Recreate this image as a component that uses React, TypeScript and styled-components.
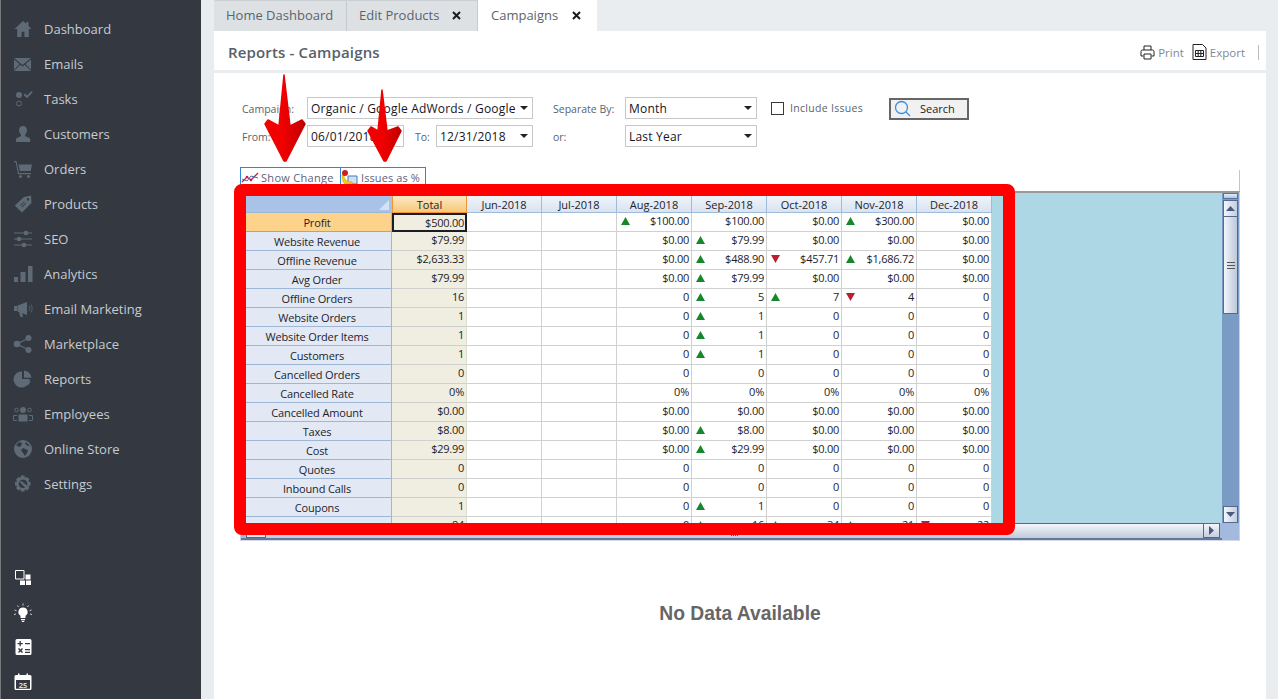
import React from "react";
import styled, { createGlobalStyle } from "styled-components";

const Global = createGlobalStyle`
  html, body { margin: 0; padding: 0; height: 100%; overflow: hidden; background: #e9edf0; }
  #root { height: 100%; }
  * { box-sizing: border-box; }
`;

const Page = styled.div`
  position: relative;
  display: flex;
  width: 1278px;
  height: 699px;
  overflow: hidden;
  font-family: "Open Sans", "Noto Sans", sans-serif;
  background: #e9edf0;
`;

const Sidebar = styled.nav`
  width: 201px;
  flex: none;
  background: #343840;
  border-left: 1px solid #77797c;
  display: flex;
  flex-direction: column;
  justify-content: space-between;
  padding: 11px 0 0;
`;
const NavList = styled.ul`
  list-style: none;
  margin: 0;
  padding: 0;
`;
const NavItem = styled.li`
  height: 35px;
  display: flex;
  align-items: center;
  padding-left: 12px;
  gap: 11px;
  color: #c5ccd2;
  font-size: 13px;
  svg { width: 20px; height: 20px; flex: none; fill: #5e6a76; color: #5e6a76; }
`;
const ToolList = styled.div`
  display: flex;
  flex-direction: column;
  padding-left: 12px;
  svg { display: block; width: 20px; height: 20px; margin: 7px 0 7.3px; color: #fff; fill: #fff; }
`;

const Main = styled.main`
  flex: 1;
  display: flex;
  flex-direction: column;
  padding: 0 12px 0 13px;
  min-width: 0;
`;
const Tabs = styled.div`
  display: flex;
  height: 31px;
  flex: none;
`;
const Tab = styled.div<{ $active?: boolean; $w: number }>`
  width: ${(p) => p.$w}px;
  display: flex;
  align-items: center;
  padding: 0 0 2px ${(p) => (p.$active ? 13 : 11)}px;
  font-size: 13px;
  color: #5a646e;
  background: ${(p) => (p.$active ? "#fff" : "#dde1e4")};
  border-top: 1px solid ${(p) => (p.$active ? "#fff" : "#c9ced3")};
  border-right: ${(p) => (p.$active ? "0" : "1px solid #c4cacf")};
  border-left: ${(p) => (p.$active ? "0" : "1px solid #dde1e4")};
`;
const TabClose = styled.span`
  margin-left: auto;
  margin-right: 16px;
  width: 9px;
  height: 9px;
  display: flex;
  svg { width: 9px; height: 9px; }
`;
const Panel = styled.section`
  flex: 1;
  background: #fff;
  display: flex;
  flex-direction: column;
  min-height: 0;
`;
const PanelHead = styled.header`
  height: 42px;
  flex: none;
  display: flex;
  align-items: center;
  padding: 3px 7px 0 14px;
  border-bottom: 3px solid #e9edf0;
`;
const Title = styled.h1`
  margin: 0 auto 0 0;
  font-size: 15px;
  font-weight: 600;
  letter-spacing: 0.15px;
  color: #56606a;
`;
const HeadAction = styled.span<{ $ml: number }>`
  display: flex;
  align-items: center;
  gap: 3px;
  margin-left: ${(p) => p.$ml}px;
  font-size: 11.500px;
  color: #7d8a98;
  svg { flex: none; }
`;
const HeadRule = styled.span`
  width: 1px;
  height: 15px;
  background: #b8bcc0;
  margin-left: 13px;
`;
const Filters = styled.div`
  display: flex;
  padding: 24px 0 0 28px;
  height: 94px;
  flex: none;
  font-size: 10.500px;
  color: #59636d;
`;
const FilterCol = styled.div<{ $w: number }>`
  width: ${(p) => p.$w}px;
  flex: none;
  display: flex;
  flex-direction: column;
  gap: 6px;
`;
const FilterRow = styled.div`
  display: flex;
  align-items: center;
  height: 22px;
`;
const Label = styled.label<{ $w: number; $pl?: number }>`
  width: ${(p) => p.$w}px;
  flex: none;
  padding: 1px 0 0 ${(p) => p.$pl ?? 0}px;
`;
const Select = styled.div<{ $w: number }>`
  width: ${(p) => p.$w}px;
  height: 22px;
  flex: none;
  border: 1px solid #c8c8c8;
  background: #fff;
  display: flex;
  align-items: center;
  padding: 0 4px 0 3px;
  font-size: 12px;
  letter-spacing: 0.2px;
  color: #15151f;
  white-space: nowrap;
  overflow: hidden;
`;
const Caret = styled.i`
  margin-left: auto;
  flex: none;
  width: 0;
  height: 0;
  border-left: 4px solid transparent;
  border-right: 4px solid transparent;
  border-top: 4px solid #222;
`;
const Check = styled.span`
  width: 13px;
  height: 13px;
  border: 1px solid #3a3a3a;
  margin-right: 6px;
  flex: none;
`;
const IncludeText = styled.span`
  letter-spacing: 0.3px;
  white-space: nowrap;
`;
const SearchBtn = styled.button`
  width: 80px;
  height: 22px;
  margin: 1px 0 0;
  border: 2px solid #666;
  background: #f1f1f1;
  display: flex;
  align-items: center;
  padding: 0 0 0 3px;
  font: 11px "Open Sans", sans-serif;
  color: #222;
  gap: 9px;
`;
const Toolbar = styled.div`
  display: flex;
  height: 24px;
  flex: none;
  margin: 0 26px;
`;
const ToolBtn = styled.button<{ $w: number; $ls: number }>`
  width: ${(p) => p.$w}px;
  height: 20px;
  padding: 0;
  display: flex;
  align-items: center;
  gap: 2px;
  background: #fff;
  border: 1px solid #2d86d8;
  margin-right: -1px;
  font: 11px "Open Sans", sans-serif;
  letter-spacing: ${(p) => p.$ls}px;
  color: #5f5f75;
  svg { flex: none; }
`;
const ToolRule = styled.div`
  flex: 1;
  margin-top: 3px;
  border-right: 1px solid #c4c4c4;
`;
const GridFrame = styled.div`
  margin: 0 26px;
  height: 350px;
  flex: none;
  display: grid;
  grid-template-columns: 1fr 17px;
  grid-template-rows: 1fr 17px;
  background: #aed7e6;
  border-top: 2px solid #999;
  border-left: 1px solid #c9d3df;
  border-right: 1px solid #c9d3df;
  border-bottom: 1px solid #d4dbe6;
`;
const GridScroll = styled.div`
  overflow: hidden;
  padding: 3px 0 0 5px;
  min-height: 0;
`;
const Sheet = styled.div`
  display: grid;
  width: 746px;
  grid-template-columns: 146px repeat(8, 75px);
  grid-auto-rows: 19px;
  font-size: 11px;
  color: #1d1d2b;
`;
const Corner = styled.div`
  height: 17px;
  background: #a9c3e8;
  position: relative;
  border-bottom: 1px solid #9db8d6;
  &::after {
    content: "";
    position: absolute;
    right: 3px;
    bottom: 2px;
    border-left: 10px solid transparent;
    border-bottom: 10px solid #d5e2f4;
  }
`;
const ColHead = styled.div<{ $on?: boolean }>`
  height: 17px;
  display: flex;
  align-items: center;
  justify-content: center;
  background: ${(p) =>
    p.$on ? "linear-gradient(#fbe9c6,#f8c878)" : "linear-gradient(#f0f4fa,#d9e3f1)"};
  border-right: 1px solid ${(p) => (p.$on ? "#f29536" : "#9ebbd9")};
  border-left: ${(p) => (p.$on ? "1px solid #f29536" : "0")};
  border-bottom: 1px solid ${(p) => (p.$on ? "#f29536" : "#9ebbd9")};
  line-height: 1;
`;
const RowHead = styled.div<{ $on?: boolean }>`
  display: flex;
  align-items: center;
  justify-content: center;
  padding: 0 3px 0 0;
  letter-spacing: -0.15px;
  background: ${(p) => (p.$on ? "#fdd28b" : "#e2e9f5")};
  border-right: 1px solid #9db8d6;
  border-bottom: 1px solid ${(p) => (p.$on ? "#f29536" : "#9db8d6")};
  margin-top: -2px;
  height: 19px;
`;
const Cell = styled.div<{ $total?: boolean; $sel?: boolean }>`
  display: flex;
  align-items: center;
  justify-content: flex-end;
  margin-top: -2px;
  height: 19px;
  padding: 0 2px 3px 4px;
  letter-spacing: -0.25px;
  background: ${(p) => (p.$total ? "#efeee0" : "#fff")};
  border-right: 1px solid ${(p) => (p.$total ? "#dcdcd0" : "#d0d0d0")};
  border-bottom: 1px solid #d0d0d0;
  ${(p) => p.$sel && "border: 2px solid #1c1c28; padding: 0 1px 1px 4px;"}
`;
const Trend = styled.svg`
  width: 9px;
  height: 8px;
  margin-right: auto;
  flex: none;
`;
const VBar = styled.div`
  background: #7a9bc4;
  display: flex;
  flex-direction: column;
  padding: 0 1px;
  min-height: 0;
  grid-row: 1;
  grid-column: 2;
`;
const MiniBtn = styled.div`
  height: 6px;
  flex: none;
  background: linear-gradient(#e4eefb, #a9c4ea);
  border: 1px solid #5a74a0;
  margin-bottom: 1px;
`;
const ArrowBtn = styled.div<{ $auto?: boolean }>`
  flex: none;
  height: 17px;
  border: 1px solid #56688e;
  background: linear-gradient(90deg, #f4f6fa, #c3cede);
  display: flex;
  align-items: center;
  justify-content: center;
  ${(p) => p.$auto && "margin-top: auto;"}
`;
const VThumb = styled.div`
  flex: none;
  height: 97px;
  border: 1px solid #56688e;
  border-top: 0;
  background: linear-gradient(90deg, #f2f4f9, #bcc8da);
  display: flex;
  align-items: center;
  justify-content: center;
`;
const Grip = styled.div`
  width: 8px;
  height: 7px;
  border-top: 1px solid #555;
  border-bottom: 1px solid #555;
  position: relative;
  &::after {
    content: "";
    position: absolute;
    left: 0;
    right: 0;
    top: 2px;
    height: 1px;
    background: #555;
  }
`;
const HBar = styled.div`
  grid-row: 2;
  grid-column: 1;
  background: #a3b9de;
  display: flex;
  padding: 0 2px 0 5px;
  border-bottom: 2px solid #64789f;
`;
const HThumb = styled.div`
  flex: 1;
  margin-left: 20px;
  border-top: 1px solid #56688e;
  background: linear-gradient(#f4f6fa, #bfcad9);
  display: flex;
  justify-content: center;
  align-items: flex-end;
  padding-bottom: 2px;
`;
const HGrip = styled.div`
  width: 7px;
  height: 2px;
  background: repeating-linear-gradient(90deg, #555 0 1px, transparent 1px 2px);
`;
const HSeg = styled.div`
  width: 20px;
  margin-right: -20px;
  border: 1px solid #56688e;
  background: #dfe6f0;
`;
const HBtn = styled.div`
  width: 17px;
  flex: none;
  border: 1px solid #56688e;
  background: linear-gradient(#f4f6fa, #c3cede);
  display: flex;
  align-items: center;
  justify-content: center;
`;
const GridCorner = styled.div`
  grid-row: 2;
  grid-column: 2;
  background: #a3b9de;
`;
const NoData = styled.div`
  margin-top: 62px;
  text-align: center;
  font: bold 19.300px "Liberation Sans", Arial, sans-serif;
  color: #666;
`;
const Highlight = styled.div`
  position: absolute;
  left: 234px;
  top: 184px;
  width: 781px;
  height: 351px;
  border: 12px solid #fe0000;
  border-radius: 8px;
  pointer-events: none;
`;
const ArrowLayer = styled.svg`
  position: absolute;
  left: 0;
  top: 0;
  width: 1278px;
  height: 699px;
  pointer-events: none;
`;

const Ico = {
  home: <svg viewBox="0 0 20 20"><path d="M10 2 1.500 10h2.700v8h4.400v-5.200h2.800V18h4.400v-8h2.700L15.500 7V3h-2.300v1.800z" /></svg>,
  mail: <svg viewBox="0 0 20 20"><path d="M1 4h17l-8.500 7zM1 5.500V16l5.500-6zM18 5.500V16l-5.500-6zM1 17l6.300-6.300 2.200 1.800 2.200-1.800L18 17z" /></svg>,
  tasks: <svg viewBox="0 0 20 20"><circle cx="6" cy="6" r="3" /><circle cx="6" cy="14.500" r="2.500" fill="none" stroke="currentColor" /><path d="m10.500 6 1.500-1.500 2 2L18.500 2l1.300 1.300-5.800 6z" /></svg>,
  user: <svg viewBox="0 0 20 20"><path d="M10 2c2.500 0 4 1.900 4 4.300 0 1.900-.8 3.500-1.800 4.400v1.500c2 .7 5 1.500 5 3.300V18H3v-2.500c0-1.800 3-2.600 5-3.300v-1.500C7 9.800 6 8.200 6 6.300 6 3.900 7.500 2 10 2z" /></svg>,
  cart: <svg viewBox="0 0 20 20"><path d="M1 2h2.500l2.500 12h12v1.200H5L2.700 3.200H1zM5.500 5.500H19L17.700 12H6.800z" /><circle cx="7.500" cy="17.500" r="1.500" /><circle cx="15.500" cy="17.500" r="1.500" /></svg>,
  tag: <svg viewBox="0 0 20 20"><path d="M11 3 18 1.500 18.500 9 9 18.500 1.800 11.500zM15 4a1.300 1.300 0 1 0 .01 0zM7 11.500l4-4 .6.600-4 4zM8.500 13l4-4 .6.600-4 4z" fillRule="evenodd" /></svg>,
  seo: <svg viewBox="0 0 20 20"><path d="M1 3.500h18v1H1zM1 9.500h18v1H1zM1 15.500h18v1H1z" /><circle cx="13" cy="4" r="2.300" /><circle cx="6" cy="10" r="2.300" /><circle cx="11" cy="16" r="2.300" /></svg>,
  bars: <svg viewBox="0 0 20 20"><path d="M1 13h4v5H1zM7.500 8h5v10h-5zM15 2h4.500v16H15z" /></svg>,
  horn: <svg viewBox="0 0 20 20"><path d="M1 7h3v5H1zM4.500 6.500 14 3v13l-9.500-3.500zM6 13.500h3L10 18H7.500z" /><path d="M16 7c1 1.500 1 3.500 0 5M18 5.500c1.500 2.500 1.500 5.500 0 8" fill="none" stroke="currentColor" strokeWidth=".8" /></svg>,
  share: <svg viewBox="0 0 20 20"><circle cx="4" cy="10" r="3.300" /><circle cx="15.500" cy="4" r="3" /><circle cx="15.500" cy="16" r="3" /><path d="M4 10 15.500 4M4 10l11.500 6" stroke="currentColor" strokeWidth="1.300" /></svg>,
  pie: <svg viewBox="0 0 20 20"><path d="M9 2.500V10h7.500A8 8 0 1 1 9 2.500zM11 1.500a8 8 0 0 1 7.500 7.200H11zM10 11.500h7.500a8 8 0 0 1-2.600 5z" /></svg>,
  team: <svg viewBox="0 0 20 20"><circle cx="10" cy="6" r="3" /><path d="M5.500 10.500h9v7h-9z" /><circle cx="3.500" cy="6" r="1.800" fill="none" stroke="currentColor" /><circle cx="16.500" cy="6" r="1.800" fill="none" stroke="currentColor" /><path d="M.5 16v-4.500h3.500M19.500 16v-4.500H16M.5 16.500H4M19.500 16.500H16" fill="none" stroke="currentColor" /></svg>,
  globe: <svg viewBox="0 0 20 20"><path fillRule="evenodd" d="M10 1a9 9 0 1 1 0 18 9 9 0 0 1 0-18zM3 6l3 2 2-1 1-3-3-1zM10 9l-2 2 2 3 2 3 2-3 1-3zM13 3l-1 2 3 2 2 0z" /></svg>,
  gear: <svg viewBox="0 0 20 20"><path fillRule="evenodd" d="M8 1.500h3.500l.5 2.300 2-.9 2.500 2.500-1.200 2 2.200.6v3.500l-2.200.5 1.200 2-2.500 2.500-2-1.200-.5 2.200H8l-.5-2.200-2 1.200L3 14l1.200-2-2.200-.5V8l2.200-.6L3 5.400l2.500-2.500 2 .9zM10 5.500a4.300 4.300 0 1 0 .01 0z" /><path d="M9 7.500 7 6.500l.5 2.500 5.500 5.500 2-2z" /></svg>,
};

const navItems: [keyof typeof Ico, string][] = [
  ["home", "Dashboard"], ["mail", "Emails"], ["tasks", "Tasks"], ["user", "Customers"],
  ["cart", "Orders"], ["tag", "Products"], ["seo", "SEO"], ["bars", "Analytics"],
  ["horn", "Email Marketing"], ["share", "Marketplace"], ["pie", "Reports"],
  ["team", "Employees"], ["globe", "Online Store"], ["gear", "Settings"],
];

const X = () => (
  <svg viewBox="0 0 9 9"><path d="M1 1l7 7M8 1L1 8" stroke="#1b1b1b" strokeWidth="2" /></svg>
);
const Tri = ({ dir, c = "#4a5a7c" }: { dir: "u" | "d" | "r"; c?: string }) => (
  <svg width="9" height="9" viewBox="0 0 9 9">
    <path fill={c} d={dir === "u" ? "M0 7 4.500 2 9 7z" : dir === "d" ? "M0 2h9L4.500 7z" : "M2 0l5 4.500L2 9z"} />
  </svg>
);

const months = ["Jun-2018", "Jul-2018", "Aug-2018", "Sep-2018", "Oct-2018", "Nov-2018", "Dec-2018"];
const rows: [string, string, ...string[]][] = [
  ["Profit", "$500.00", "", "", "^$100.00", "$100.00", "$0.00", "^$300.00", "$0.00"],
  ["Website Revenue", "$79.99", "", "", "$0.00", "^$79.99", "$0.00", "$0.00", "$0.00"],
  ["Offline Revenue", "$2,633.33", "", "", "$0.00", "^$488.90", "v$457.71", "^$1,686.72", "$0.00"],
  ["Avg Order", "$79.99", "", "", "$0.00", "^$79.99", "$0.00", "$0.00", "$0.00"],
  ["Offline Orders", "16", "", "", "0", "^5", "^7", "v4", "0"],
  ["Website Orders", "1", "", "", "0", "^1", "0", "0", "0"],
  ["Website Order Items", "1", "", "", "0", "^1", "0", "0", "0"],
  ["Customers", "1", "", "", "0", "^1", "0", "0", "0"],
  ["Cancelled Orders", "0", "", "", "0", "0", "0", "0", "0"],
  ["Cancelled Rate", "0%", "", "", "0%", "0%", "0%", "0%", "0%"],
  ["Cancelled Amount", "$0.00", "", "", "$0.00", "$0.00", "$0.00", "$0.00", "$0.00"],
  ["Taxes", "$8.00", "", "", "$0.00", "^$8.00", "$0.00", "$0.00", "$0.00"],
  ["Cost", "$29.99", "", "", "$0.00", "^$29.99", "$0.00", "$0.00", "$0.00"],
  ["Quotes", "0", "", "", "0", "0", "0", "0", "0"],
  ["Inbound Calls", "0", "", "", "0", "0", "0", "0", "0"],
  ["Coupons", "1", "", "", "0", "^1", "0", "0", "0"],
  ["", "84", "", "", "0", "^16", "^34", "^21", "v22"],
];

const CellBody = ({ v }: { v: string }) => {
  const mark = v[0];
  if (mark === "^")
    return (
      <>
        <Trend viewBox="0 0 9 8"><path d="M4.500 0 9 8H0z" fill="#17872c" /></Trend>
        {v.slice(1)}
      </>
    );
  if (mark === "v")
    return (
      <>
        <Trend viewBox="0 0 9 8"><path d="M0 0h9L4.500 8z" fill="#b81f30" /></Trend>
        {v.slice(1)}
      </>
    );
  return <>{v}</>;
};

export default function App() {
  return (
    <Page>
      <Global />
      <Sidebar>
        <NavList>
          {navItems.map(([k, t]) => (
            <NavItem key={t}>{Ico[k]}{t}</NavItem>
          ))}
        </NavList>
        <ToolList>
          <svg viewBox="0 0 20 20">
            <path d="M2.500 1.500h8.500v8.500H2.500z" fill="none" stroke="#fff" strokeWidth="1" />
            <path d="M12.500 5.500h5v5h-5zM7 11.500h5v4.500H7zM13 11.500h5v4.500h-5z" />
          </svg>
          <svg viewBox="0 0 20 20">
            <path d="M10 4.500a4.500 4.500 0 0 1 2.500 8.300V15h-5v-2.200A4.500 4.500 0 0 1 10 4.500zM8 16h4v1.200H8zM8.800 18h2.400v1H8.800z" />
            <path d="M10 .5v2M4.500 2.500l1 1.500M15.500 2.500l-1 1.500M1.500 7l2 .7M18.500 7l-2 .7M1 11.500l2-.5M19 11.500l-2-.5" stroke="#ddd" strokeWidth=".9" />
          </svg>
          <svg viewBox="0 0 20 20">
            <path fillRule="evenodd" d="M4 2h13a1.500 1.500 0 0 1 1.500 1.500v13A1.500 1.500 0 0 1 17 18H4a1.500 1.500 0 0 1-1.500-1.500v-13A1.500 1.500 0 0 1 4 2zM6.500 4v2H4.500v1.300h2v2h1.300v-2h2V6h-2V4zM12 6v1.300h5V6zM5 12l1.500 1.500L5 15l1 1 1.500-1.500L9 16l1-1-1.500-1.500L10 12l-1-1-1.500 1.500L6 11zM12 12v1.300h5V12zM12 14.700V16h5v-1.300z" />
          </svg>
          <svg viewBox="0 0 20 20">
            <path fillRule="evenodd" d="M3 3h2V1.500h1.500V3h7V1.500H15V3h2a1.500 1.500 0 0 1 1.500 1.500v12A1.500 1.500 0 0 1 17 18H3a1.500 1.500 0 0 1-1.500-1.500v-12A1.500 1.500 0 0 1 3 3zM3 8v8.500h14V8z" />
            <rect x="3" y="8" width="14" height="8.500" fill="#343840" />
            <text x="10" y="15.500" fontSize="7.500" fontWeight="700" textAnchor="middle" fill="#d8d8d8" fontFamily="Open Sans">25</text>
          </svg>
        </ToolList>
      </Sidebar>
      <Main>
        <Tabs>
          <Tab $w={133}>Home Dashboard</Tab>
          <Tab $w={131}>Edit Products<TabClose><X /></TabClose></Tab>
          <Tab $w={119} $active>Campaigns<TabClose><X /></TabClose></Tab>
        </Tabs>
        <Panel>
          <PanelHead>
            <Title>Reports - Campaigns</Title>
            <HeadAction $ml={0}>
              <svg width="15" height="15" viewBox="0 0 15 15" fill="none" stroke="#222" strokeWidth="1">
                <path d="M4 5V1h7v4M3.500 11H1V6.500A1.500 1.500 0 0 1 2.500 5h10A1.500 1.500 0 0 1 14 6.500V11h-2.500M4 9h7v5H4z" />
              </svg>
              Print
            </HeadAction>
            <HeadAction $ml={8}>
              <svg width="15" height="16" viewBox="0 0 15 16" fill="none" stroke="#222" strokeWidth="1">
                <path d="M1 .5h9.500l3.500 3.500v11.500H1zM3.500 6.500h8v6h-8zM3.500 9.500h8M6.200 6.500v6M8.800 6.500v6" />
              </svg>
              Export
            </HeadAction>
            <HeadRule />
          </PanelHead>
          <Filters>
            <FilterCol $w={311}>
              <FilterRow>
                <Label $w={65}>Campaign:</Label>
                <Select $w={226}>Organic / Google AdWords / Google<Caret /></Select>
              </FilterRow>
              <FilterRow>
                <Label $w={65}>From:</Label>
                <Select $w={97}>06/01/2018<Caret /></Select>
                <Label $w={32} $pl={11}>To:</Label>
                <Select $w={97}>12/31/2018<Caret /></Select>
              </FilterRow>
            </FilterCol>
            <FilterCol $w={218}>
              <FilterRow>
                <Label $w={72}>Separate By:</Label>
                <Select $w={132}>Month<Caret /></Select>
              </FilterRow>
              <FilterRow>
                <Label $w={72}>or:</Label>
                <Select $w={132}>Last Year<Caret /></Select>
              </FilterRow>
            </FilterCol>
            <FilterCol $w={118}>
              <FilterRow>
                <Check /><IncludeText>Include Issues</IncludeText>
              </FilterRow>
            </FilterCol>
            <FilterCol $w={80}>
              <FilterRow>
                <SearchBtn>
                  <svg width="17" height="17" viewBox="0 0 17 17" fill="none" stroke="#3d8fe0" strokeWidth="1.300">
                    <circle cx="7.500" cy="7.500" r="6" />
                    <path d="m12 12 4 4" />
                  </svg>
                  Search
                </SearchBtn>
              </FilterRow>
            </FilterCol>
          </Filters>
          <Toolbar>
            <ToolBtn $w={101} $ls={0.3}>
              <svg width="18" height="14" viewBox="0 0 18 14" fill="none">
                <path d="M1 12 6 7l4 3 7-7" stroke="#c8203a" strokeWidth="1.300" />
                <path d="M1 9l5 2 4-5 7 2" stroke="#3f6fc0" strokeWidth="1" />
                <circle cx="6" cy="7" r="1.300" fill="#c8203a" />
                <circle cx="10" cy="10" r="1.300" fill="#c8203a" />
              </svg>
              Show Change
            </ToolBtn>
            <ToolBtn $w={86} $ls={0.1}>
              <svg width="18" height="16" viewBox="0 0 18 16">
                <path d="M7 7h9v8H7z" fill="#cfe0f5" stroke="#4a78b8" />
                <path d="M3 6c0 4 2 7 8 7l1 2H5C2 15 1 10 1 6z" fill="#f6cf1d" stroke="#c99a00" strokeWidth=".6" />
                <circle cx="4" cy="4" r="3" fill="#cc2020" />
              </svg>
              Issues as %
            </ToolBtn>
            <ToolRule />
          </Toolbar>
          <GridFrame>
            <GridScroll>
              <Sheet>
                <Corner />
                <ColHead $on>Total</ColHead>
                {months.map((m) => <ColHead key={m}>{m}</ColHead>)}
                {rows.map((r, i) => (
                  <React.Fragment key={i}>
                    <RowHead $on={i === 0}>{r[0]}</RowHead>
                    {r.slice(1).map((v, j) => (
                      <Cell key={j} $total={j === 0} $sel={i === 0 && j === 0}>
                        <CellBody v={v} />
                      </Cell>
                    ))}
                  </React.Fragment>
                ))}
              </Sheet>
            </GridScroll>
            <VBar>
              <MiniBtn />
              <ArrowBtn><Tri dir="u" /></ArrowBtn>
              <VThumb><Grip /></VThumb>
              <ArrowBtn $auto><Tri dir="d" /></ArrowBtn>
            </VBar>
            <HBar>
              <HSeg />
              <HThumb><HGrip /></HThumb>
              <HBtn><Tri dir="r" /></HBtn>
            </HBar>
            <GridCorner />
          </GridFrame>
          <NoData>No Data Available</NoData>
        </Panel>
      </Main>
      <Highlight />
      <ArrowLayer viewBox="0 0 1278 699">
        <defs>
          <linearGradient id="redShade" x1="0" x2="1" y1="0" y2="0">
            <stop offset="0.45" stopColor="#f00000" />
            <stop offset="1" stopColor="#c00000" />
          </linearGradient>
        </defs>
        <path d="M284 75 290 126 302 120 305 124 286 161 284 161 265 124 268 120 279 126z" fill="url(#redShade)" stroke="url(#redShade)" strokeWidth="1.500" strokeLinejoin="round" />
        <path d="M382 90 387 131 398 127 401 131 386 161 384 161 368 131 371 127 378 131z" fill="url(#redShade)" stroke="url(#redShade)" strokeWidth="1.500" strokeLinejoin="round" />
      </ArrowLayer>
    </Page>
  );
}
